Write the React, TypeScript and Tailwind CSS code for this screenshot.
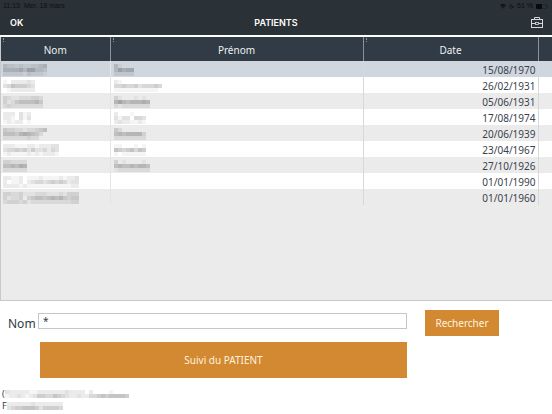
import React from 'react';
import { Moon, Wifi } from 'lucide-react';

interface MaskProps {
  rows: string[];
  label: string;
}

interface Patient {
  nom: string[];
  prenom: string[] | null;
  date: string;
}

// Each digit is the darkness of one 4px block of a masked value.
const Mask: React.FC<MaskProps> = ({ rows, label }) => (
  <svg
    role="img"
    aria-label={label}
    width={rows[0].length * 4}
    height={rows.length * 4}
    className="block"
    shapeRendering="crispEdges"
  >
    {rows.map((row, y) =>
      row.split('').map((value, x) => (
        <rect
          key={`${x}-${y}`}
          x={x * 4}
          y={y * 4}
          width="4"
          height="4"
          fill="#3a3d42"
          fillOpacity={Number(value) / 20}
        />
      ))
    )}
  </svg>
);

const patients: Patient[] = [
  { nom: ['43323223345', '55556477443', '22222132221'], prenom: ['41000', '47566', '22222'], date: '15/08/1970' },
  { nom: ['10222232', '34655543', '01222222'], prenom: ['210000000000', '445445344454', '111111111110'], date: '26/02/1931' },
  { nom: ['3211222332', '3124555564', '2322222222'], prenom: ['310001010', '686566676', '212222222'], date: '05/06/1931' },
  { nom: ['2220312', '2210313', '1212201'], prenom: ['20001000', '31330443', '23221121'], date: '17/08/1974' },
  { nom: ['43322122345', '55546765420', '22222232200'], prenom: ['42000000', '56566663', '22222222'], date: '20/06/1939' },
  { nom: ['22211122122233', '34454535334243', '12111121212221'], prenom: ['11000101', '65456465', '10111111'], date: '23/04/1967' },
  { nom: ['332222', '556576', '222222'], prenom: ['301000010', '565565665', '122222222'], date: '27/10/1926' },
  { nom: ['2211201112111121223', '2011202344345454233', '2222121111111111122'], prenom: null, date: '01/01/1990' },
  { nom: ['3322311122211121333', '3122303455456564344', '2333231222222222233'], prenom: null, date: '01/01/1960' },
];

const rowColour = (index: number) => {
  if (index === 0) {
    return 'bg-[#cfd6dd]';
  }
  return index % 2 === 0 ? 'bg-[#ebebeb]' : 'bg-white';
};

const ToolboxIcon: React.FC = () => (
  <svg width="12" height="12" viewBox="0 0 12 12" fill="none" stroke="#d4d8da" strokeWidth="1" aria-hidden="true">
    <rect x="0.5" y="2.5" width="11" height="8" />
    <path d="M3.5 2.5V0.5H8.5V2.5" />
    <path d="M0.5 6.5H4.5M7.5 6.5H11.5" />
    <rect x="4.5" y="5.5" width="3" height="2" strokeWidth="0.8" />
  </svg>
);

const TopBar: React.FC = () => (
  <header className="bg-[#2a3137] text-white">
    <div className="flex h-3 items-center justify-between pr-1 pl-[3px] font-['Liberation_Sans',sans-serif] text-[7px] leading-3 text-[#0c1013]">
      <div className="flex gap-1">
        <span>11:13</span>
        <span>Mer. 18 mars</span>
      </div>
      <div className="flex items-center gap-[3px]">
        <Wifi size={6} strokeWidth={4} aria-hidden="true" />
        <Moon size={5} strokeWidth={3} aria-hidden="true" />
        <span>51 %</span>
        <svg width="12" height="5" viewBox="0 0 12 5" aria-hidden="true">
          <rect x="0.5" y="0.5" width="10" height="4" rx="1" fill="none" stroke="#171d21" strokeWidth="0.5" />
          <rect x="0" y="0" width="6" height="5" rx="1" fill="#080b0d" />
          <path d="M11.5 1.5V3.5" stroke="#171d21" strokeWidth="0.8" />
        </svg>
      </div>
    </div>
    <div className="grid h-[23px] grid-cols-3 items-center px-[10px] pb-[2px] font-['Inter',sans-serif] text-[9px] leading-4">
      <button type="button" className="justify-self-start font-semibold">
        OK
      </button>
      <h1 className="text-center font-semibold">PATIENTS</h1>
      <button type="button" aria-label="Outils" className="mr-[-1px] justify-self-end">
        <ToolboxIcon />
      </button>
    </div>
  </header>
);

// Small grip dots at the left edge of each header cell
const headerCell =
  "relative border-r border-[#89929a] p-0 pt-[2px] font-normal before:absolute before:top-px before:left-[2px] before:h-1 before:border-l before:border-dotted before:border-[#89929a]";

const PatientTable: React.FC = () => (
  <div className="mt-[2px] min-h-[264px] border-b border-l border-[#c9c9c9] bg-[#ebebeb]">
    <table className="w-full table-fixed border-collapse">
      <colgroup>
        <col className="w-[109px]" />
        <col />
        <col className="w-[175px]" />
        <col className="w-[14px]" />
      </colgroup>
      <thead>
        <tr className="h-6 bg-[#303b45] text-[10px] leading-[22px] text-[#eef0f2]">
          <th scope="col" className={headerCell}>Nom</th>
          <th scope="col" className={headerCell}>Prénom</th>
          <th scope="col" className={headerCell}>Date</th>
          <td className="p-0" />
        </tr>
      </thead>
      <tbody>
        {patients.map((patient, index) => (
          <tr key={index} className={`h-4 text-[10px] leading-[14px] text-[#39424d] ${rowColour(index)}`}>
            <td className="border-r border-[#e3e5e7] p-0 pt-[2px] pl-[2px]">
              <Mask rows={patient.nom} label="Nom masqué" />
            </td>
            <td className="border-r border-[#d6d9dc] p-0 pt-[2px] pl-[3px]">
              {patient.prenom && <Mask rows={patient.prenom} label="Prénom masqué" />}
            </td>
            <td className="border-r border-[#d6d9dc] p-0 pt-[2px] pr-[2px] text-right">{patient.date}</td>
            <td className="p-0" />
          </tr>
        ))}
      </tbody>
    </table>
  </div>
);

const SearchForm: React.FC = () => (
  <form className="grid grid-cols-[38px_1fr_74px] items-center gap-y-[6px] pt-[9px] pr-[53px]">
    <label htmlFor="nom" className="pt-[2px] pl-2 text-[12px] leading-5 text-[#303b45]">
      Nom
    </label>
    <input
      id="nom"
      type="text"
      defaultValue="*"
      className="mr-[18px] mb-1 h-4 min-w-0 border border-[#c4c7ca] bg-white px-1 text-[10px] text-[#303b45] outline-none"
    />
    <button type="button" className="h-[26px] bg-[#d38932] text-[10px] text-[#fff3df]">
      Rechercher
    </button>
    <button
      type="button"
      className="col-start-2 mr-[18px] ml-[2px] h-9 bg-[#d38932] pt-px text-[10px] text-[#fff3df]"
    >
      Suivi du PATIENT
    </button>
  </form>
);

const App: React.FC = () => (
  <div className="min-h-screen bg-white font-['Noto_Sans',sans-serif]">
    <TopBar />
    <main>
      <PatientTable />
      <SearchForm />
      <div className="flex flex-col gap-1 pt-[12px] pl-[2px] text-[9px] leading-[8px] text-[#303b45]">
        <div className="flex">
          <span>(</span>
          <Mask
            rows={['3222221122222223222202000010000', '1223212355446543223224456566665']}
            label="Établissement masqué"
          />
        </div>
        <div className="flex">
          <span>F</span>
          <Mask rows={['22222232222222', '34556665355554']} label="Utilisateur masqué" />
        </div>
      </div>
    </main>
  </div>
);

export default App;
